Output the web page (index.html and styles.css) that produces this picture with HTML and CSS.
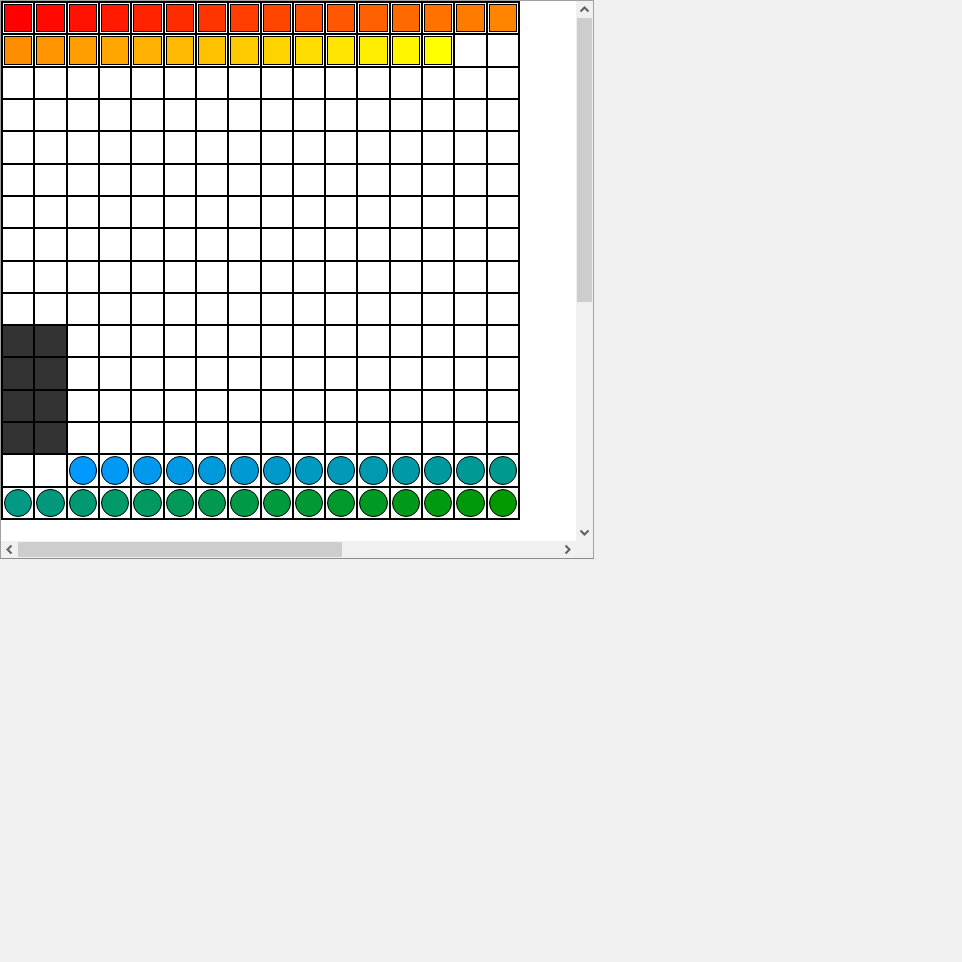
FILE: index.html
```html
<!DOCTYPE html>
<html>
<head>
<meta charset="utf-8">
<link rel="stylesheet" href="styles.css">
</head>
<body>
<div class="win">
  <div class="view">
    <div class="board">
      <i class="c"><b class="sq" style="--c:#ff0000"></b></i>
      <i class="c"><b class="sq" style="--c:#ff0900"></b></i>
      <i class="c"><b class="sq" style="--c:#ff1200"></b></i>
      <i class="c"><b class="sq" style="--c:#ff1a00"></b></i>
      <i class="c"><b class="sq" style="--c:#ff2300"></b></i>
      <i class="c"><b class="sq" style="--c:#ff2c00"></b></i>
      <i class="c"><b class="sq" style="--c:#ff3500"></b></i>
      <i class="c"><b class="sq" style="--c:#ff3e00"></b></i>
      <i class="c"><b class="sq" style="--c:#ff4600"></b></i>
      <i class="c"><b class="sq" style="--c:#ff4f00"></b></i>
      <i class="c"><b class="sq" style="--c:#ff5800"></b></i>
      <i class="c"><b class="sq" style="--c:#ff6100"></b></i>
      <i class="c"><b class="sq" style="--c:#ff6a00"></b></i>
      <i class="c"><b class="sq" style="--c:#ff7200"></b></i>
      <i class="c"><b class="sq" style="--c:#ff7b00"></b></i>
      <i class="c"><b class="sq" style="--c:#ff8400"></b></i>

      <i class="c"><b class="sq" style="--c:#ff8d00"></b></i>
      <i class="c"><b class="sq" style="--c:#ff9500"></b></i>
      <i class="c"><b class="sq" style="--c:#ff9e00"></b></i>
      <i class="c"><b class="sq" style="--c:#ffa700"></b></i>
      <i class="c"><b class="sq" style="--c:#ffb000"></b></i>
      <i class="c"><b class="sq" style="--c:#ffb900"></b></i>
      <i class="c"><b class="sq" style="--c:#ffc100"></b></i>
      <i class="c"><b class="sq" style="--c:#ffca00"></b></i>
      <i class="c"><b class="sq" style="--c:#ffd300"></b></i>
      <i class="c"><b class="sq" style="--c:#ffdc00"></b></i>
      <i class="c"><b class="sq" style="--c:#ffe500"></b></i>
      <i class="c"><b class="sq" style="--c:#ffed00"></b></i>
      <i class="c"><b class="sq" style="--c:#fff600"></b></i>
      <i class="c"><b class="sq" style="--c:#ffff00"></b></i>
      <i class="c"></i><i class="c"></i>

      <i class="c"></i><i class="c"></i><i class="c"></i><i class="c"></i><i class="c"></i><i class="c"></i><i class="c"></i><i class="c"></i><i class="c"></i><i class="c"></i><i class="c"></i><i class="c"></i><i class="c"></i><i class="c"></i><i class="c"></i><i class="c"></i>
      <i class="c"></i><i class="c"></i><i class="c"></i><i class="c"></i><i class="c"></i><i class="c"></i><i class="c"></i><i class="c"></i><i class="c"></i><i class="c"></i><i class="c"></i><i class="c"></i><i class="c"></i><i class="c"></i><i class="c"></i><i class="c"></i>
      <i class="c"></i><i class="c"></i><i class="c"></i><i class="c"></i><i class="c"></i><i class="c"></i><i class="c"></i><i class="c"></i><i class="c"></i><i class="c"></i><i class="c"></i><i class="c"></i><i class="c"></i><i class="c"></i><i class="c"></i><i class="c"></i>
      <i class="c"></i><i class="c"></i><i class="c"></i><i class="c"></i><i class="c"></i><i class="c"></i><i class="c"></i><i class="c"></i><i class="c"></i><i class="c"></i><i class="c"></i><i class="c"></i><i class="c"></i><i class="c"></i><i class="c"></i><i class="c"></i>
      <i class="c"></i><i class="c"></i><i class="c"></i><i class="c"></i><i class="c"></i><i class="c"></i><i class="c"></i><i class="c"></i><i class="c"></i><i class="c"></i><i class="c"></i><i class="c"></i><i class="c"></i><i class="c"></i><i class="c"></i><i class="c"></i>
      <i class="c"></i><i class="c"></i><i class="c"></i><i class="c"></i><i class="c"></i><i class="c"></i><i class="c"></i><i class="c"></i><i class="c"></i><i class="c"></i><i class="c"></i><i class="c"></i><i class="c"></i><i class="c"></i><i class="c"></i><i class="c"></i>
      <i class="c"></i><i class="c"></i><i class="c"></i><i class="c"></i><i class="c"></i><i class="c"></i><i class="c"></i><i class="c"></i><i class="c"></i><i class="c"></i><i class="c"></i><i class="c"></i><i class="c"></i><i class="c"></i><i class="c"></i><i class="c"></i>
      <i class="c"></i><i class="c"></i><i class="c"></i><i class="c"></i><i class="c"></i><i class="c"></i><i class="c"></i><i class="c"></i><i class="c"></i><i class="c"></i><i class="c"></i><i class="c"></i><i class="c"></i><i class="c"></i><i class="c"></i><i class="c"></i>

      <i class="c dark"></i><i class="c dark"></i><i class="c"></i><i class="c"></i><i class="c"></i><i class="c"></i><i class="c"></i><i class="c"></i><i class="c"></i><i class="c"></i><i class="c"></i><i class="c"></i><i class="c"></i><i class="c"></i><i class="c"></i><i class="c"></i>
      <i class="c dark"></i><i class="c dark"></i><i class="c"></i><i class="c"></i><i class="c"></i><i class="c"></i><i class="c"></i><i class="c"></i><i class="c"></i><i class="c"></i><i class="c"></i><i class="c"></i><i class="c"></i><i class="c"></i><i class="c"></i><i class="c"></i>
      <i class="c dark"></i><i class="c dark"></i><i class="c"></i><i class="c"></i><i class="c"></i><i class="c"></i><i class="c"></i><i class="c"></i><i class="c"></i><i class="c"></i><i class="c"></i><i class="c"></i><i class="c"></i><i class="c"></i><i class="c"></i><i class="c"></i>
      <i class="c dark"></i><i class="c dark"></i><i class="c"></i><i class="c"></i><i class="c"></i><i class="c"></i><i class="c"></i><i class="c"></i><i class="c"></i><i class="c"></i><i class="c"></i><i class="c"></i><i class="c"></i><i class="c"></i><i class="c"></i><i class="c"></i>

      <i class="c"></i><i class="c"></i>
      <i class="c"><b class="dot" style="--c:#0099ff"></b></i>
      <i class="c"><b class="dot" style="--c:#0099f6"></b></i>
      <i class="c"><b class="dot" style="--c:#0099ed"></b></i>
      <i class="c"><b class="dot" style="--c:#0099e5"></b></i>
      <i class="c"><b class="dot" style="--c:#0099dc"></b></i>
      <i class="c"><b class="dot" style="--c:#0099d3"></b></i>
      <i class="c"><b class="dot" style="--c:#0099ca"></b></i>
      <i class="c"><b class="dot" style="--c:#0099c1"></b></i>
      <i class="c"><b class="dot" style="--c:#0099b9"></b></i>
      <i class="c"><b class="dot" style="--c:#0099b0"></b></i>
      <i class="c"><b class="dot" style="--c:#0099a7"></b></i>
      <i class="c"><b class="dot" style="--c:#00999e"></b></i>
      <i class="c"><b class="dot" style="--c:#009995"></b></i>
      <i class="c"><b class="dot" style="--c:#00998d"></b></i>

      <i class="c"><b class="dot" style="--c:#009984"></b></i>
      <i class="c"><b class="dot" style="--c:#00997b"></b></i>
      <i class="c"><b class="dot" style="--c:#009972"></b></i>
      <i class="c"><b class="dot" style="--c:#00996a"></b></i>
      <i class="c"><b class="dot" style="--c:#009961"></b></i>
      <i class="c"><b class="dot" style="--c:#009958"></b></i>
      <i class="c"><b class="dot" style="--c:#00994f"></b></i>
      <i class="c"><b class="dot" style="--c:#009946"></b></i>
      <i class="c"><b class="dot" style="--c:#00993e"></b></i>
      <i class="c"><b class="dot" style="--c:#009935"></b></i>
      <i class="c"><b class="dot" style="--c:#00992c"></b></i>
      <i class="c"><b class="dot" style="--c:#009923"></b></i>
      <i class="c"><b class="dot" style="--c:#00991a"></b></i>
      <i class="c"><b class="dot" style="--c:#009912"></b></i>
      <i class="c"><b class="dot" style="--c:#009909"></b></i>
      <i class="c"><b class="dot" style="--c:#009900"></b></i>
    </div>
  </div>
  <div class="vbar">
    <div class="btn"><svg width="17" height="17" viewBox="0 0 17 17"><polyline points="4.5,10.5 8.5,6.5 12.5,10.5" class="chev"/></svg></div>
    <div class="vtrack"><div class="vthumb"></div></div>
    <div class="btn"><svg width="17" height="17" viewBox="0 0 17 17"><polyline points="4.5,6.5 8.5,10.5 12.5,6.5" class="chev"/></svg></div>
  </div>
  <div class="hbar">
    <div class="btn"><svg width="17" height="17" viewBox="0 0 17 17"><polyline points="10.5,4.5 6.5,8.5 10.5,12.5" class="chev"/></svg></div>
    <div class="htrack"><div class="hthumb"></div></div>
    <div class="btn"><svg width="17" height="17" viewBox="0 0 17 17"><polyline points="6.5,4.5 10.5,8.5 6.5,12.5" class="chev"/></svg></div>
  </div>
  <div class="corner"></div>
</div>
</body>
</html>
```
FILE: styles.css
```css
html, body {
  margin: 0;
  padding: 0;
  background: #f0f0f0;
}

.win {
  width: 592px;
  height: 557px;
  border: 1px solid #a0a0a0;
  border-bottom-color: #8c8c8c;
  display: grid;
  grid-template-columns: 575px 17px;
  grid-template-rows: 540px 17px;
  background: #ffffff;
}

.view {
  background: #ffffff;
  overflow: hidden;
}

.board {
  box-sizing: border-box;
  width: 519px;
  height: 519px;
  padding: 2px;
  gap: 2px;
  background: #000000;
  display: grid;
  grid-template-columns: repeat(16, 1fr);
  grid-template-rows: repeat(16, 1fr);
}

.c {
  display: flex;
  padding: 1px;
  background: #ffffff;
  min-width: 0;
  min-height: 0;
}

.c.dark {
  background: #333333;
}

.sq,
.dot {
  flex: 1;
  border: 1px solid #000000;
  background: var(--c);
}

.dot {
  border-radius: 50%;
}

.vbar {
  display: flex;
  flex-direction: column;
  background: #f0f0f0;
}

.hbar {
  display: flex;
  background: #f0f0f0;
}

.btn {
  width: 17px;
  height: 17px;
  flex: none;
  display: flex;
}

.chev {
  fill: none;
  stroke: #606060;
  stroke-width: 2;
}

.vtrack {
  flex: 1;
  display: flex;
  flex-direction: column;
}

.vthumb {
  height: 284px;
  margin: 0 1px;
  background: #cdcdcd;
}

.htrack {
  flex: 1;
  display: flex;
}

.hthumb {
  width: 324px;
  margin: 1px 0;
  background: #cdcdcd;
}

.corner {
  background: #f0f0f0;
}
```
